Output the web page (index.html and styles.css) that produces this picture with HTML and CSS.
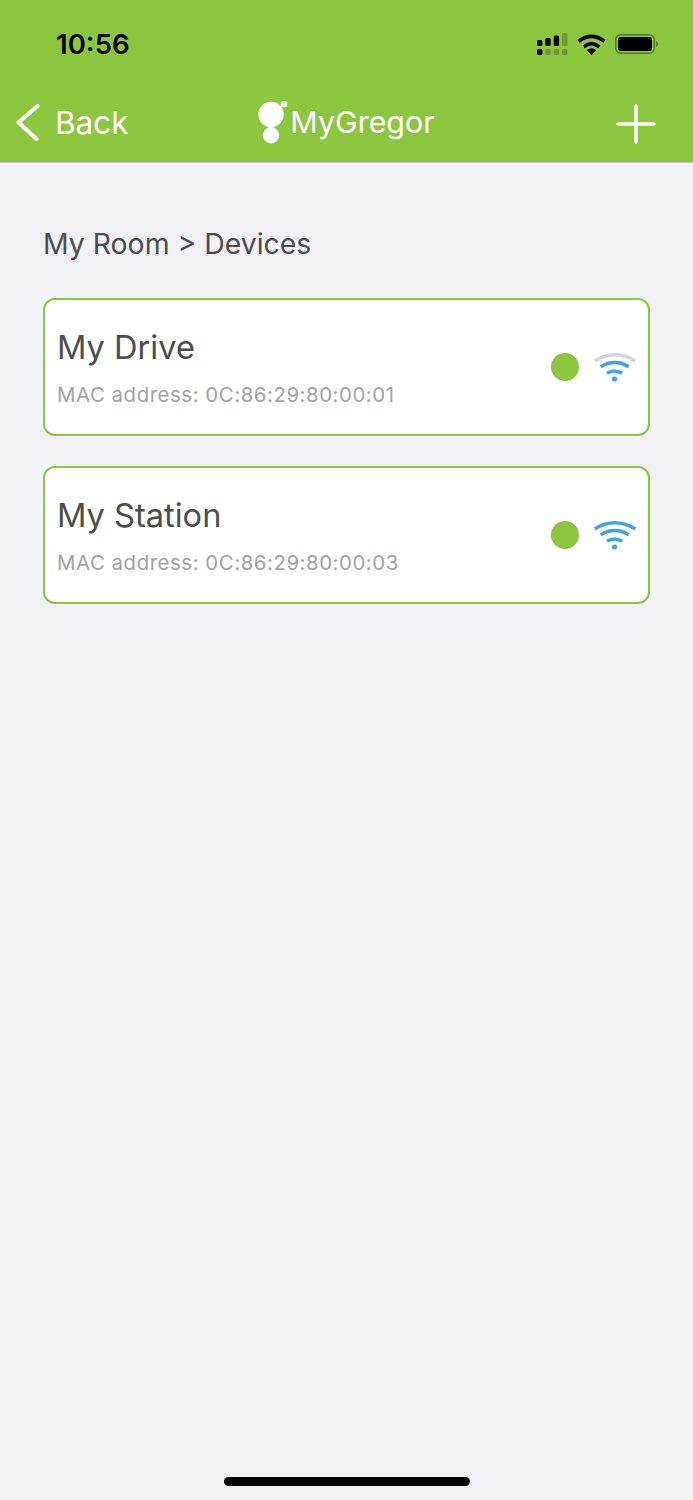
FILE: index.html
```html
<!DOCTYPE html>
<html lang="en">
<head>
    <meta charset="UTF-8">
    <meta name="viewport" content="width=device-width, initial-scale=1.0">
    <title>MyGregor</title>
    <link rel="stylesheet" href="styles.css">
</head>
<body>
<div class="page">
    <div class="header">
        <div class="status-bar">
            <span class="time">10:56</span>
            <div class="status-icons">
                <svg class="signal" width="31" height="22" viewBox="0 0 31 22">
                    <rect x="0" y="7" width="5.4" height="6" rx="1.5" fill="#000"/>
                    <rect x="8.3" y="5" width="5.4" height="8" rx="1.5" fill="#000"/>
                    <rect x="16.7" y="2.5" width="5.4" height="10.5" rx="1.5" fill="#000"/>
                    <rect x="25" y="0" width="5.4" height="13" rx="1.5" fill="#6e9a35"/>
                    <rect x="0" y="16" width="5.4" height="6" rx="1.5" fill="#000"/>
                    <rect x="8.3" y="16" width="5.4" height="6" rx="1.5" fill="#6e9a35"/>
                    <rect x="16.7" y="16" width="5.4" height="6" rx="1.5" fill="#6e9a35"/>
                    <rect x="25" y="16" width="5.4" height="6" rx="1.5" fill="#6e9a35"/>
                </svg>
                <svg class="status-wifi" width="29" height="21" viewBox="0 0 29 21">
                    <path d="M14.5 21 L9.8 16 Q14.5 12.4 19.2 16 Z" fill="#000"/>
                    <path d="M6.8 12.8 Q14.5 6.6 22.2 12.8" fill="none" stroke="#000" stroke-width="3.6"/>
                    <path d="M1.6 7.4 Q14.5 -2.6 27.4 7.4" fill="none" stroke="#000" stroke-width="3.6"/>
                </svg>
                <svg class="battery" width="43" height="20" viewBox="0 0 43 20">
                    <rect x="0.75" y="0.75" width="38.5" height="18.5" rx="5" fill="none" stroke="#55752b" stroke-width="1.5"/>
                    <rect x="3" y="3" width="34" height="14" rx="3" fill="#000"/>
                    <path d="M41 7 Q43 8 43 10 Q43 12 41 13 Z" fill="#55752b"/>
                </svg>
            </div>
        </div>
        <div class="nav">
            <div class="nav-back">
                <svg width="24" height="38" viewBox="0 0 24 38">
                    <path d="M21.5 3 L2.5 19.5 L20.5 36" fill="none" stroke="#fff" stroke-width="4" stroke-linecap="round" stroke-linejoin="round"/>
                </svg>
                <span>Back</span>
            </div>
            <div class="logo">
                <svg width="31" height="44" viewBox="0 0 31 44">
                    <circle cx="13" cy="14.5" r="12.7" fill="#fff"/>
                    <circle cx="26" cy="4.3" r="3.3" fill="#fff"/>
                    <circle cx="13" cy="35.3" r="8.2" fill="#fff"/>
                </svg>
                <span>MyGregor</span>
            </div>
            <div class="nav-add">
                <svg width="40" height="40" viewBox="0 0 40 40">
                    <path d="M20 2 V38 M2 20 H38" fill="none" stroke="#fff" stroke-width="3.6" stroke-linecap="round"/>
                </svg>
            </div>
        </div>
    </div>

    <div class="content">
        <p class="breadcrumb">My Room &gt; Devices</p>

        <div class="device">
            <div class="device-info">
                <div class="device-name">My Drive</div>
                <div class="device-mac">MAC address: 0C:86:29:80:00:01</div>
            </div>
            <span class="dot"></span>
            <svg class="wifi" width="44" height="30" viewBox="0 0 44 30">
                <circle cx="21.5" cy="27" r="2.6" fill="#3fa4df"/>
                <path d="M14 21.3 Q21.5 16.7 29 21.3" fill="none" stroke="#3fa4df" stroke-width="3.6"/>
                <path d="M7.7 14.7 Q21.7 6.3 35.7 14.7" fill="none" stroke="#3fa4df" stroke-width="3.6"/>
                <path d="M1.7 9 Q22 -3.4 42.3 9" fill="none" stroke="#d6d6d6" stroke-width="3.6"/>
            </svg>
        </div>

        <div class="device">
            <div class="device-info">
                <div class="device-name">My Station</div>
                <div class="device-mac">MAC address: 0C:86:29:80:00:03</div>
            </div>
            <span class="dot"></span>
            <svg class="wifi" width="44" height="30" viewBox="0 0 44 30">
                <circle cx="21.5" cy="27" r="2.6" fill="#3fa4df"/>
                <path d="M14 21.3 Q21.5 16.7 29 21.3" fill="none" stroke="#3fa4df" stroke-width="3.6"/>
                <path d="M7.7 14.7 Q21.7 6.3 35.7 14.7" fill="none" stroke="#3fa4df" stroke-width="3.6"/>
                <path d="M1.7 9 Q22 -3.4 42.3 9" fill="none" stroke="#3fa4df" stroke-width="3.6"/>
            </svg>
        </div>
    </div>

    <div class="home-bar"></div>
</div>
</body>
</html>
```

FILE: styles.css
```css
body {
  margin: 0;
  background: #f1f1f6;
  font-family: "Inter", "Liberation Sans", sans-serif;
  color: #4d4d4d;
}

.page {
  height: 1500px;
  display: flex;
  flex-direction: column;
  overflow: hidden;
}

.header {
  height: 163px;
  box-sizing: border-box;
  background: #8cc63f;
  border-bottom: 1px solid #c9c9c9;
  color: white;
}

.status-bar {
  height: 88px;
  display: flex;
  align-items: center;
  justify-content: space-between;
  padding: 0 35px 0 56px;
}

.time {
  color: black;
  font-size: 27.6px;
  font-weight: 600;
}

.status-icons {
  display: flex;
  align-items: center;
  gap: 9px;
}

.nav {
  height: 74px;
  box-sizing: border-box;
  display: grid;
  grid-template-columns: 1fr auto 1fr;
  align-items: center;
  padding: 0 16px 6px;
}

.nav-back {
  display: flex;
  align-items: center;
  gap: 15px;
  font-size: 31.5px;
}

.nav-back svg,
.nav-add svg,
.logo svg {
  display: block;
}

.logo {
  display: flex;
  align-items: center;
  gap: 1px;
  font-size: 30.4px;
}

.nav-add {
  justify-self: end;
  margin: 3px 21px 0 0;
}

.content {
  flex: 1;
  padding: 0 43px;
}

.breadcrumb {
  margin: 63px 0 36px;
  font-size: 28.4px;
  line-height: 36px;
}

.device {
  height: 138px;
  box-sizing: border-box;
  margin-bottom: 30px;
  padding: 0 11px 0 12px;
  display: flex;
  align-items: center;
  background: white;
  border: 2px solid #8cc63f;
  border-radius: 12px;
}

.device-info {
  flex: 1;
}

.device-name {
  font-size: 32.6px;
  line-height: 42px;
  margin-bottom: 14px;
}

.device-mac {
  font-size: 20.4px;
  letter-spacing: 0.55px;
  line-height: 26px;
  color: #a3a3a3;
}

.dot {
  width: 28px;
  height: 28px;
  border-radius: 50%;
  background: #8cc63f;
  margin-right: 14px;
}

.wifi {
  display: block;
}

.home-bar {
  width: 246px;
  height: 9px;
  margin: 0 auto 14px;
  background: black;
  border-radius: 5px;
}
```
